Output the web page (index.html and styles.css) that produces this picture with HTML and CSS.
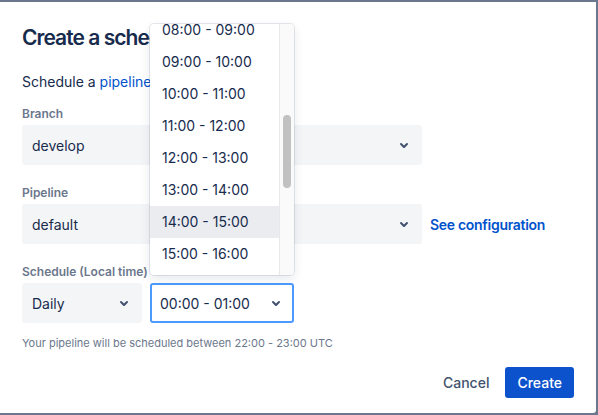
FILE: index.html
```html
<!DOCTYPE html>
<html>
<head>
<meta charset="utf-8">
<link rel="stylesheet" href="styles.css">
</head>
<body>
<div class="modal">
  <h1 class="title">Create a schedule</h1>
  <p class="desc">Schedule a <a class="link">pipeline</a> to run on a branch.</p>

  <div class="field">
    <div class="label">Branch</div>
    <div class="row">
      <div class="select wide"><span>develop</span><svg class="chev" viewBox="0 0 24 24"><path d="M8.292 10.293a1.009 1.009 0 0 0 0 1.419l2.939 2.965c.218.215.5.322.779.322s.556-.107.769-.322l2.93-2.955a1.01 1.01 0 0 0 0-1.419.987.987 0 0 0-1.406 0l-2.298 2.317-2.307-2.327a.99.99 0 0 0-1.406 0z"/></svg></div>
    </div>
  </div>

  <div class="field">
    <div class="label">Pipeline</div>
    <div class="row">
      <div class="select wide"><span>default</span><svg class="chev" viewBox="0 0 24 24"><path d="M8.292 10.293a1.009 1.009 0 0 0 0 1.419l2.939 2.965c.218.215.5.322.779.322s.556-.107.769-.322l2.93-2.955a1.01 1.01 0 0 0 0-1.419.987.987 0 0 0-1.406 0l-2.298 2.317-2.307-2.327a.99.99 0 0 0-1.406 0z"/></svg></div>
      <a class="link strong">See configuration</a>
    </div>
  </div>

  <div class="field">
    <div class="label">Schedule (Local time)</div>
    <div class="row gap8">
      <div class="select daily"><span>Daily</span><svg class="chev" viewBox="0 0 24 24"><path d="M8.292 10.293a1.009 1.009 0 0 0 0 1.419l2.939 2.965c.218.215.5.322.779.322s.556-.107.769-.322l2.93-2.955a1.01 1.01 0 0 0 0-1.419.987.987 0 0 0-1.406 0l-2.298 2.317-2.307-2.327a.99.99 0 0 0-1.406 0z"/></svg></div>
      <div class="select time focused"><span>00:00 - 01:00</span><svg class="chev" viewBox="0 0 24 24"><path d="M8.292 10.293a1.009 1.009 0 0 0 0 1.419l2.939 2.965c.218.215.5.322.779.322s.556-.107.769-.322l2.93-2.955a1.01 1.01 0 0 0 0-1.419.987.987 0 0 0-1.406 0l-2.298 2.317-2.307-2.327a.99.99 0 0 0-1.406 0z"/></svg></div>
    </div>
    <div class="help">Your pipeline will be scheduled between 22:00 - 23:00 UTC</div>
  </div>

  <div class="footer">
    <button class="btn subtle">Cancel</button>
    <button class="btn primary">Create</button>
  </div>

  <div class="menu">
    <div class="menu-list">
      <div class="opt">08:00 - 09:00</div>
      <div class="opt">09:00 - 10:00</div>
      <div class="opt">10:00 - 11:00</div>
      <div class="opt">11:00 - 12:00</div>
      <div class="opt">12:00 - 13:00</div>
      <div class="opt">13:00 - 14:00</div>
      <div class="opt hover">14:00 - 15:00</div>
      <div class="opt">15:00 - 16:00</div>
      <div class="opt">16:00 - 17:00</div>
    </div>
    <div class="scrollbar"><div class="thumb"></div></div>
  </div>
</div>
</body>
</html>
```

FILE: styles.css
```css
* { box-sizing: border-box; }
html, body { margin: 0; padding: 0; }
body {
  background: #6b778c;
  font-family: Inter, "Noto Sans", sans-serif;
  color: #172b4d;
  width: 598px;
  height: 415px;
  overflow: hidden;
}
.modal {
  position: relative;
  margin-top: 2px;
  width: 596px;
  height: 411px;
  background: #fff;
  border-bottom-right-radius: 3px;
  padding: 24px 22px 0 22px;
}
.title {
  margin: 0;
  font-size: 21px;
  line-height: 24px;
  font-weight: 600;
  letter-spacing: -0.95px;
  white-space: nowrap;
}
.desc {
  margin: 22px 0 0 0;
  font-size: 14px;
  line-height: 20px;
  white-space: nowrap;
}
.link { color: #0052cc; cursor: pointer; }
.link.strong { font-weight: 600; font-size: 14px; margin-left: 8px; letter-spacing: -0.3px; }
.field { margin-top: 14px; }
.field + .field { margin-top: 20px; }
.label {
  font-size: 12px;
  line-height: 16px;
  font-weight: 600;
  color: #6b778c;
}
.row {
  display: flex;
  align-items: center;
  margin-top: 3px;
}
.gap8 { gap: 8px; }
.select {
  height: 40px;
  background: #f4f5f7;
  border-radius: 3px;
  display: flex;
  align-items: center;
  justify-content: space-between;
  padding: 0 6px 0 10px;
  font-size: 14px;
  color: #172b4d;
}
.wide { width: 400px; }
.daily { width: 120px; }
.time { width: 144px; background: #fff; border: 2px solid #4c9aff; padding-left: 8px; padding-right: 4px; }
.chev { width: 24px; height: 24px; fill: #42526e; }
.help {
  margin-top: 12px;
  font-size: 11px;
  line-height: 16px;
  color: #6b778c;
}
.footer {
  display: flex;
  justify-content: flex-end;
  gap: 4px;
  margin-top: 16px;
  width: 552px;
}
.btn {
  font-family: inherit;
  font-size: 14px;
  font-weight: 500;
  height: 31px;
  border: 0;
  border-radius: 3px;
  padding: 0 12px;
  cursor: pointer;
}
.subtle { background: transparent; color: #42526e; }
.primary { background: #0c52cc; color: #fff; padding: 0 12px; }
.menu {
  position: absolute;
  left: 150px;
  top: 22px;
  width: 144px;
  height: 251px;
  background: #fff;
  border-radius: 4px;
  box-shadow: 0 0 0 1px rgba(9,30,66,0.10), 0 4px 11px rgba(9,30,66,0.10);
  overflow: hidden;
  display: flex;
}
.menu-list {
  flex: 1;
  margin-top: -10px;
}
.opt {
  height: 32px;
  line-height: 32px;
  padding-left: 12px;
  font-size: 14px;
  color: #172b4d;
  white-space: nowrap;
}
.opt.hover { background: #ebecf0; }
.scrollbar {
  width: 15px;
  background: #fafafa;
  border-left: 1px solid #e8e8e8;
  padding: 91px 3px 0 3px;
}
.thumb {
  width: 8px;
  height: 73px;
  background: #c1c1c1;
  border-radius: 4px;
}
```
